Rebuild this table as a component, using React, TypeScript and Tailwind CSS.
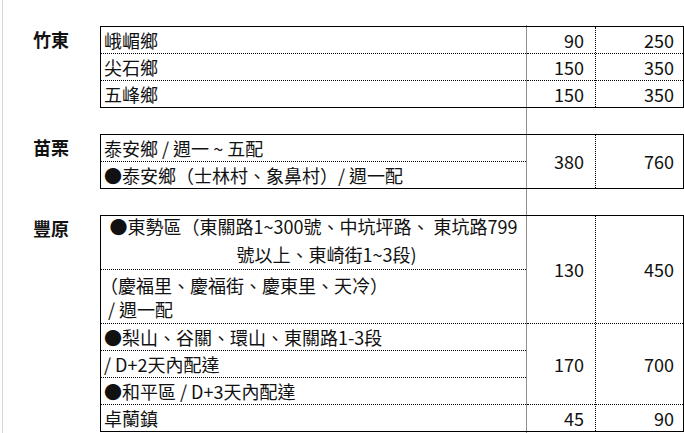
const cell = "flex items-center whitespace-nowrap";
const dot = "border-b border-dotted border-black";
const txt = `${cell} pl-[3px]`;
const n1 = `${cell} justify-end pr-[11px]`;
const n2 = `${cell} justify-end pr-[9px]`;

function Gap({ h, line = true }: { h: string; line?: boolean }) {
  return (
    <div className={`flex ${h}`}>
      <div className="w-[97px]" />
      <div className={`w-[427px] ${line ? "border-r border-[#8f8f8f]" : ""}`} />
    </div>
  );
}

function Group({ label, text, num1, num2 }: { label: string; text: React.ReactNode; num1: React.ReactNode; num2: React.ReactNode }) {
  return (
    <div className="flex">
      <div className="w-[97px] pl-[30px]">
        <div className="h-[26px] leading-[26px] font-bold">{label}</div>
      </div>
      <div className="flex w-[584px] border border-black">
        <div className="flex w-[426px] flex-col border-r border-[#8f8f8f]">{text}</div>
        <div className="flex w-[69px] flex-col border-r border-dotted border-black">{num1}</div>
        <div className="flex flex-1 flex-col">{num2}</div>
      </div>
    </div>
  );
}

export default function App() {
  return (
    <div className="ml-[2px] min-h-[433px] w-[682px] border-l border-[#d6d6d6] bg-white font-['Noto_Sans_CJK_TC','Noto_Sans',sans-serif] text-[18px] text-[#111]">
      <Gap h="h-[25px]" line={false} />
      <Gap h="h-px" />
      <Group
        label="竹東"
        text={
          <>
            <div className={`${txt} ${dot} h-[27px]`}>峨嵋鄉</div>
            <div className={`${txt} ${dot} h-[27px]`}>尖石鄉</div>
            <div className={`${txt} h-[26px]`}>五峰鄉</div>
          </>
        }
        num1={
          <>
            <div className={`${n1} ${dot} h-[27px]`}>90</div>
            <div className={`${n1} ${dot} h-[27px]`}>150</div>
            <div className={`${n1} h-[26px]`}>150</div>
          </>
        }
        num2={
          <>
            <div className={`${n2} ${dot} h-[27px]`}>250</div>
            <div className={`${n2} ${dot} h-[27px]`}>350</div>
            <div className={`${n2} h-[26px]`}>350</div>
          </>
        }
      />
      <Gap h="h-[26px]" />
      <Group
        label="苗栗"
        text={
          <>
            <div className={`${txt} ${dot} h-[27px]`}>泰安鄉 / 週一 ~ 五配</div>
            <div className={`${txt} h-[26px]`}>●泰安鄉（士林村、象鼻村）/ 週一配</div>
          </>
        }
        num1={<div className={`${n1} h-[53px]`}>380</div>}
        num2={<div className={`${n2} h-[53px]`}>760</div>}
      />
      <Gap h="h-[26px]" />
      <Group
        label="豐原"
        text={
          <>
            <div className={`${dot} flex h-[54px] flex-col justify-center pb-[5px] text-center leading-[28px] whitespace-nowrap`}>
              <span>●東勢區（東關路1~300號、中坑坪路、 東坑路799</span>
              <span className="pl-[26px]">號以上、東崎街1~3段)</span>
            </div>
            <div className={`${dot} flex h-[54px] flex-col justify-center pl-[3px] leading-[24px] whitespace-nowrap`}>
              <span className="-ml-[4px]">（慶福里、慶福街、慶東里、天冷）</span>
              <span className="pl-[4px]">/ 週一配</span>
            </div>
            <div className={`${txt} ${dot} h-[27px]`}>●梨山、谷關、環山、東關路1-3段</div>
            <div className={`${txt} ${dot} h-[27px]`}>/ D+2天內配達</div>
            <div className={`${txt} ${dot} h-[27px]`}>●和平區 / D+3天內配達</div>
            <div className={`${txt} h-[26px]`}>卓蘭鎮</div>
          </>
        }
        num1={
          <>
            <div className={`${n1} ${dot} h-[108px]`}>130</div>
            <div className={`${n1} ${dot} h-[81px]`}>170</div>
            <div className={`${n1} h-[26px]`}>45</div>
          </>
        }
        num2={
          <>
            <div className={`${n2} ${dot} h-[108px]`}>450</div>
            <div className={`${n2} ${dot} h-[81px]`}>700</div>
            <div className={`${n2} h-[26px]`}>90</div>
          </>
        }
      />
      <Gap h="h-[2px]" />
    </div>
  );
}
